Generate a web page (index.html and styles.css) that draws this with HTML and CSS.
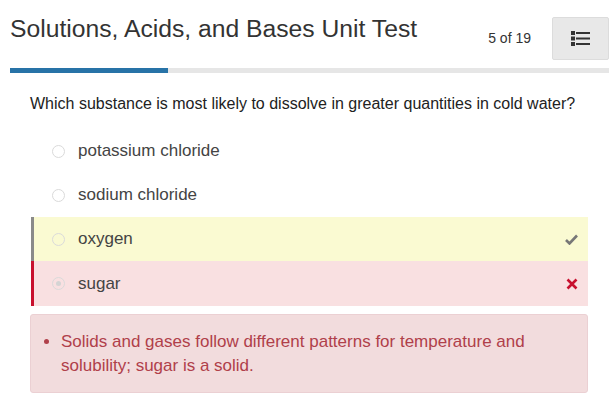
FILE: index.html
```html
<!DOCTYPE html>
<html>
<head>
<meta charset="utf-8">
<link rel="stylesheet" href="styles.css">
</head>
<body>
<header class="header">
  <h1 class="title">Solutions, Acids, and Bases Unit Test</h1>
  <span class="count">5 of 19</span>
  <button class="menu-btn" aria-label="Question list">
    <svg width="19" height="15" viewBox="0 0 19 15">
      <rect x="0" y="0" width="4" height="4" fill="#333"/>
      <rect x="5" y="1" width="14" height="2" fill="#333"/>
      <rect x="0" y="5.5" width="4" height="4" fill="#333"/>
      <rect x="5" y="6.5" width="14" height="2" fill="#333"/>
      <rect x="0" y="11" width="4" height="4" fill="#333"/>
      <rect x="5" y="12" width="14" height="2" fill="#333"/>
    </svg>
  </button>
</header>
<div class="progress"><div class="progress-fill" style="width:158px"></div></div>
<main class="content">
  <p class="question">Which substance is most likely to dissolve in greater quantities in cold water?</p>
  <ul class="options">
    <li class="option"><span class="radio"></span><span class="label">potassium chloride</span></li>
    <li class="option"><span class="radio"></span><span class="label">sodium chloride</span></li>
    <li class="option correct"><span class="radio"></span><span class="label">oxygen</span>
      <svg class="mark" width="13" height="11" viewBox="0 0 13 11"><path d="M1 6 L4.5 9.5 L12 1.5" fill="none" stroke="#777" stroke-width="2.6"/></svg>
    </li>
    <li class="option wrong"><span class="radio selected"></span><span class="label">sugar</span>
      <svg class="mark" width="12" height="12" viewBox="0 0 12 12"><path d="M1.5 1.5 L10.5 10.5 M10.5 1.5 L1.5 10.5" fill="none" stroke="#c8102e" stroke-width="2.6"/></svg>
    </li>
  </ul>
  <div class="feedback">
    <ul class="feedback-list">
      <li>Solids and gases follow different patterns for temperature and solubility; sugar is a solid.</li>
    </ul>
  </div>
</main>
</body>
</html>
```
FILE: styles.css
```css
* { box-sizing: border-box; }
body {
  margin: 0;
  font-family: "Liberation Sans", Arial, sans-serif;
  color: #333;
  background: #fff;
}
.header {
  display: flex;
  align-items: flex-start;
  height: 68px;
  padding: 0 2px 0 10px;
}
.title {
  flex: 1;
  margin: 14px 0 0;
  font-size: 24.7px;
  font-weight: normal;
  line-height: 30px;
  color: #333;
}
.count {
  margin: 30px 21px 0 0;
  font-size: 14px;
  line-height: 16px;
  color: #333;
}
.menu-btn {
  margin-top: 17px;
  width: 57px;
  height: 43px;
  border: 1px solid #dcdcdc;
  border-radius: 2px;
  background: #e8e8e8;
  display: flex;
  align-items: center;
  justify-content: center;
  padding: 0;
}
.progress {
  margin: 0 2px 0 10px;
  height: 5px;
  background: #e6e6e6;
}
.progress-fill {
  height: 5px;
  background: #2873a7;
}
.content {
  padding: 0 23px 0 30px;
}
.question {
  margin: 21px 0 15px;
  font-size: 16px;
  line-height: 20px;
  color: #222;
}
.options {
  list-style: none;
  margin: 0 0 8px 1px;
  padding: 0;
}
.option {
  display: flex;
  align-items: center;
  height: 44px;
  padding-left: 18px;
  padding-right: 10px;
  border-left: 3px solid transparent;
  font-size: 17px;
  color: #444;
}
.option.correct {
  background: #fafad2;
  border-left-color: #8a8a8a;
}
.option.wrong {
  background: #f9e0e1;
  border-left-color: #c8102e;
  height: 45px;
}
.radio {
  width: 13px;
  height: 13px;
  border: 1px solid #dadada;
  border-radius: 50%;
  margin-right: 13px;
  background: #fff;
  position: relative;
}
.correct .radio, .wrong .radio { background: transparent; }
.radio.selected::after {
  content: "";
  position: absolute;
  left: 3px;
  top: 3px;
  width: 5px;
  height: 5px;
  border-radius: 50%;
  background: #d4d4d4;
}
.label { flex: 1; }
.mark { flex: none; }
.feedback {
  border: 1px solid #ebd0d3;
  border-radius: 3px;
  background: #f2dcdd;
  padding: 15px 12px 14px 0;
  color: #b0404a;
}
.feedback-list {
  margin: 0;
  padding-left: 30px;
  font-size: 17px;
  line-height: 24px;
}
```
